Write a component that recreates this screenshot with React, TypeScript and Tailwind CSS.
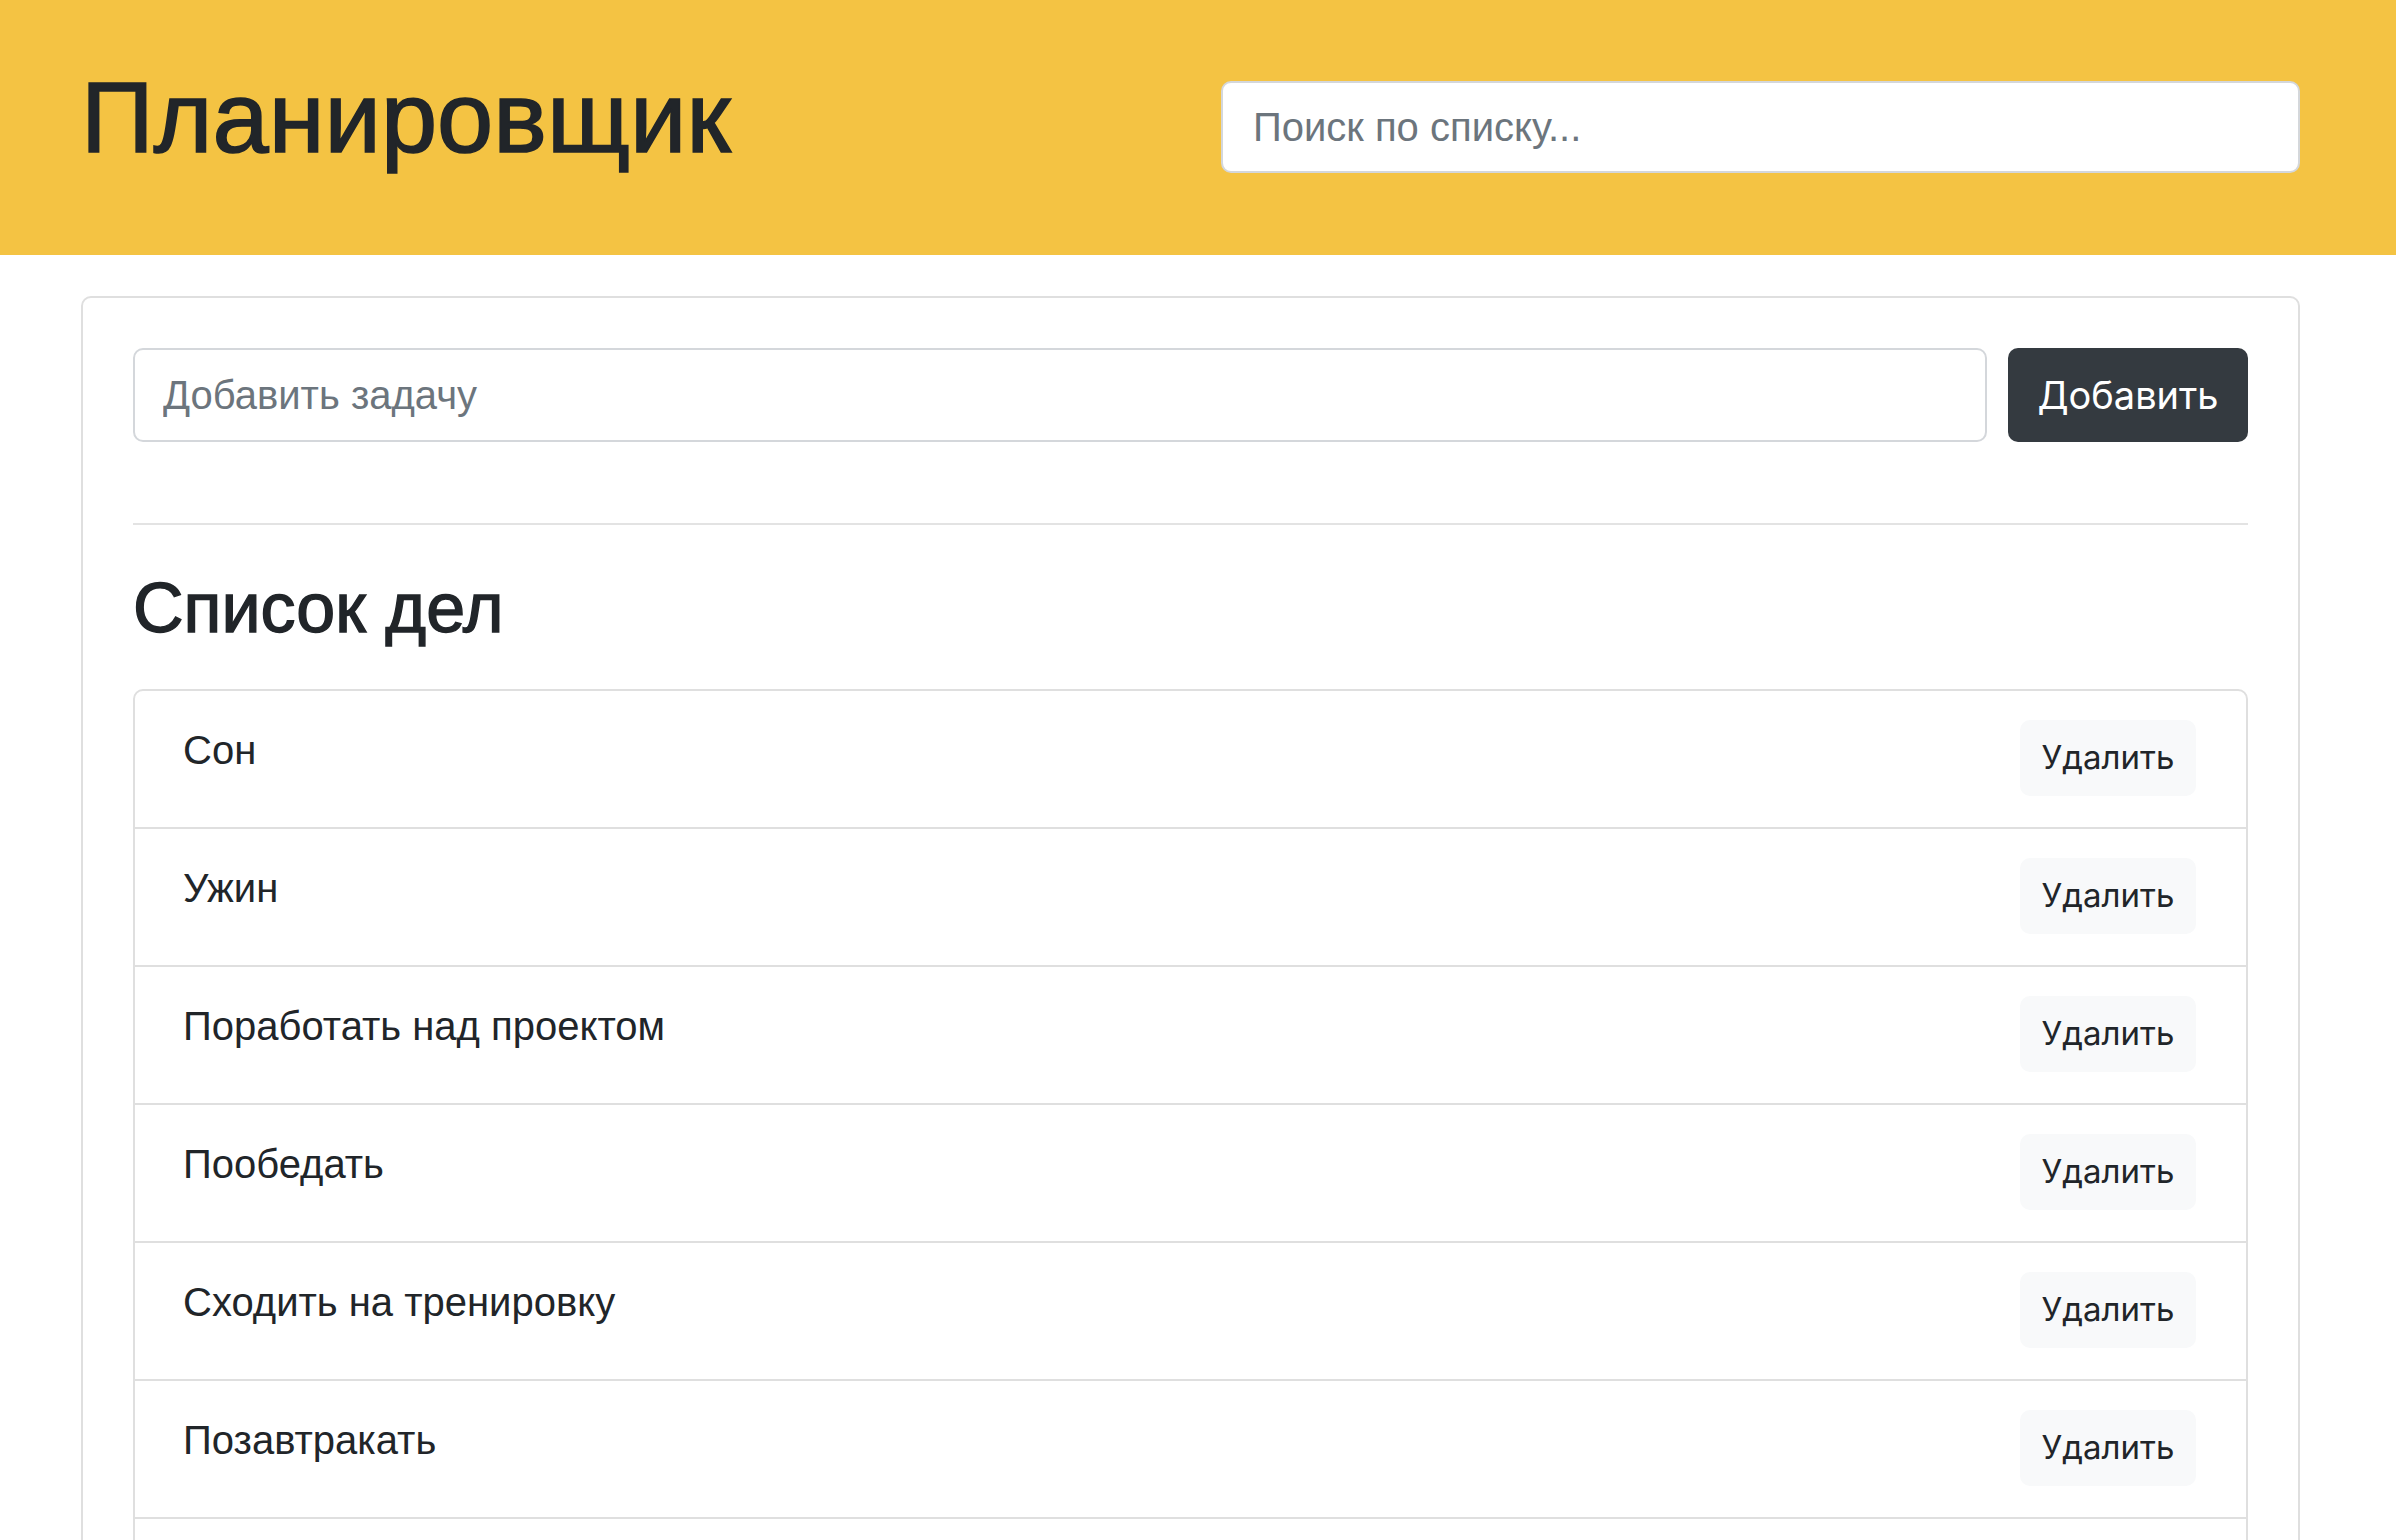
import { useState } from "react";

const initialTodos = [
  "Сон",
  "Ужин",
  "Поработать над проектом",
  "Пообедать",
  "Сходить на тренировку",
  "Позавтракать",
  "Проснуться",
];

function TodoItem({ label, first }: { label: string; first: boolean }) {
  return (
    <li
      className={`flex items-start justify-between pl-[48px] pr-[50px] pt-[29px] pb-[31px] ${
        first ? "" : "border-t-2 border-[#dfdfdf]"
      }`}
    >
      <span className="text-[40px] leading-[60px] text-[#212529]">{label}</span>
      <button className="h-[76px] w-[176px] rounded-[10px] bg-[#f8f9fa] font-['Inter'] text-[33px] text-[#212529]">
        Удалить
      </button>
    </li>
  );
}

export default function App() {
  const [todos] = useState(initialTodos);

  return (
    <div className="min-h-screen bg-white font-['Liberation_Sans',Arial,sans-serif] text-[#212529]">
      <header className="flex h-[255px] items-start justify-between bg-[#f4c343] pl-[81px] pr-[96px]">
        <h1 className="mt-[57px] text-[101px] leading-[120px] text-[#212529] [-webkit-text-stroke:1.6px_#212529]">
          Планировщик
        </h1>
        <input
          type="text"
          placeholder="Поиск по списку..."
          className="mt-[81px] h-[92px] w-[1079px] rounded-[10px] border-2 border-[#d4d7db] bg-white px-[30px] text-[40px] text-[#212529] outline-none placeholder:text-[#6c757d]"
        />
      </header>

      <main className="pl-[81px] pr-[96px] pt-[41px]">
        <div className="rounded-[10px] border-2 border-[#dfdfdf] px-[50px] pt-[50px] pb-[60px]">
          <form className="flex gap-[21px]" onSubmit={(e) => e.preventDefault()}>
            <input
              type="text"
              placeholder="Добавить задачу"
              className="h-[94px] flex-1 rounded-[10px] border-2 border-[#d4d7db] px-[28px] text-[40px] outline-none placeholder:text-[#6c757d]"
            />
            <button className="h-[94px] w-[240px] rounded-[10px] bg-[#343a40] font-['Inter'] text-[38px] text-white">
              Добавить
            </button>
          </form>

          <hr className="mt-[81px] border-t-2 border-[#e3e3e3]" />

          <h2 className="mt-[41px] text-[70px] leading-[84px] [-webkit-text-stroke:1.4px_#212529]">
            Список дел
          </h2>

          <ul className="mt-[39px] rounded-[10px] border-2 border-[#dfdfdf]">
            {todos.map((t, i) => (
              <TodoItem key={t} label={t} first={i === 0} />
            ))}
          </ul>
        </div>
      </main>
    </div>
  );
}
